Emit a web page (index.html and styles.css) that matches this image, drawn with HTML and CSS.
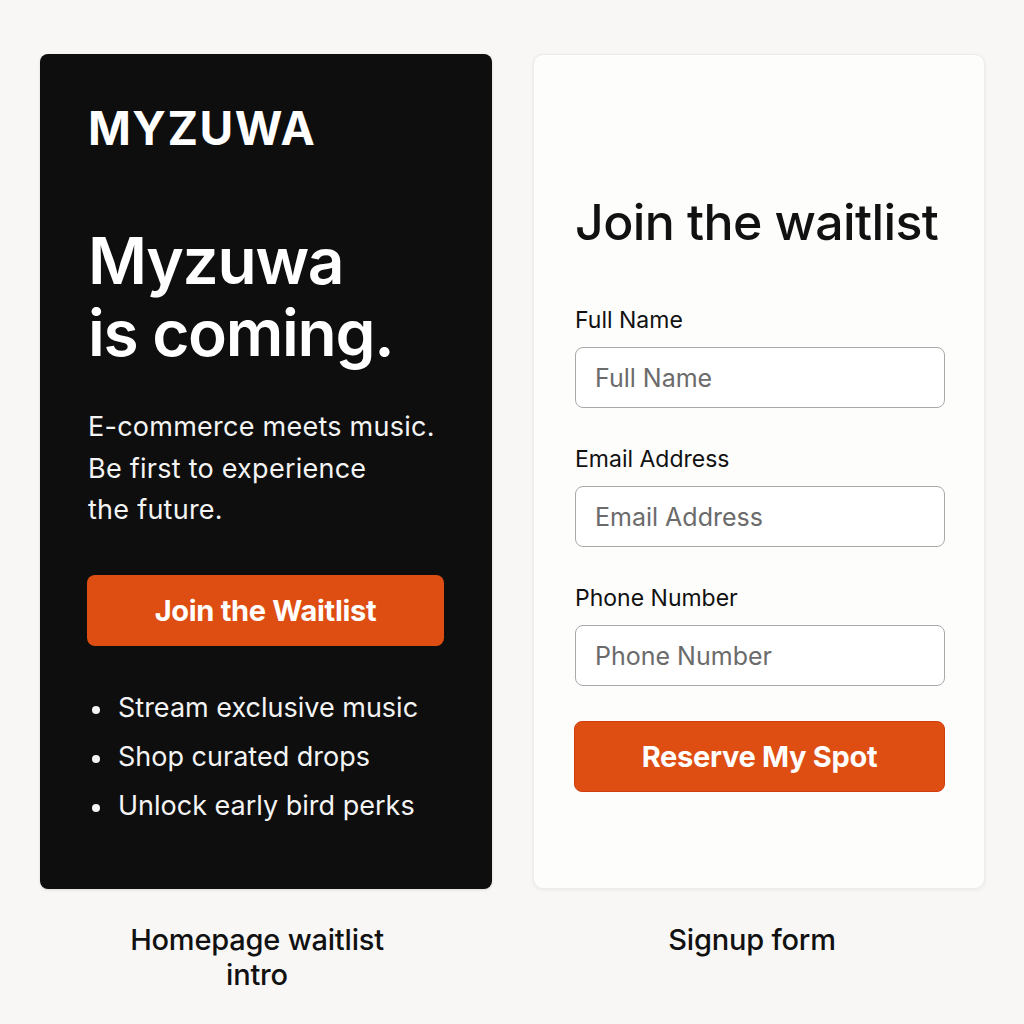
FILE: index.html
```html
<!DOCTYPE html>
<html lang="en">
<head>
<meta charset="utf-8">
<title>Myzuwa waitlist</title>
<link rel="stylesheet" href="styles.css">
</head>
<body>
<main class="board">
  <section class="column">
    <div class="card card-dark">
      <div class="brand">MYZUWA</div>
      <h1 class="headline">Myzuwa<br>is coming.</h1>
      <p class="lede">E-commerce meets music.<br>Be first to experience<br>the future.</p>
      <button class="btn btn-hero" type="button">Join the Waitlist</button>
      <ul class="perks">
        <li>Stream exclusive music</li>
        <li>Shop curated drops</li>
        <li>Unlock early bird perks</li>
      </ul>
    </div>
    <p class="caption caption-left">Homepage waitlist intro</p>
  </section>
  <section class="column">
    <div class="card card-light">
      <h2 class="form-title">Join the waitlist</h2>
      <form class="form">
        <label class="field">
          <span class="field-label">Full Name</span>
          <input class="field-input" type="text" placeholder="Full Name">
        </label>
        <label class="field">
          <span class="field-label">Email Address</span>
          <input class="field-input" type="email" placeholder="Email Address">
        </label>
        <label class="field">
          <span class="field-label">Phone Number</span>
          <input class="field-input" type="tel" placeholder="Phone Number">
        </label>
        <button class="btn btn-submit" type="button">Reserve My Spot</button>
      </form>
    </div>
    <p class="caption caption-right">Signup form</p>
  </section>
</main>
</body>
</html>
```

FILE: styles.css
```css
* { box-sizing: border-box; }

html, body {
  margin: 0;
  padding: 0;
}

body {
  background: #f8f7f5;
  font-family: Inter, "Noto Sans", "Liberation Sans", sans-serif;
  color: #111;
  width: 1024px;
  height: 1024px;
  overflow: hidden;
}

.board {
  display: grid;
  grid-template-columns: 452px 452px;
  column-gap: 41px;
  padding: 54px 0 0 40px;
}

.column {
  display: flex;
  flex-direction: column;
}

.card {
  height: 835px;
  border-radius: 8px;
}

.card-dark {
  background: #0e0e0e;
  color: #fff;
  padding: 51px 48px 0 48px;
  box-shadow: 0 1px 3px rgba(0,0,0,0.12);
}

.brand {
  font-size: 46px;
  line-height: 46px;
  font-weight: 700;
  letter-spacing: 1.5px;
}

.headline {
  margin: 74px 0 0 0;
  font-size: 64px;
  line-height: 72px;
  font-weight: 600;
  letter-spacing: -1.3px;
}

.lede {
  margin: 37px 0 0 0;
  font-size: 27px;
  line-height: 41.5px;
  font-weight: 400;
  letter-spacing: 0.25px;
  color: #f4f4f4;
}

.btn {
  display: flex;
  align-items: center;
  justify-content: center;
  height: 71px;
  border-radius: 8px;
  background: #de4e12;
  color: #fff;
  font-family: inherit;
  font-size: 29px;
  font-weight: 700;
  letter-spacing: -0.3px;
  cursor: pointer;
}

.btn-hero {
  margin-top: 44px;
  width: 357px;
  margin-left: -1px;
  border: none;
}

.perks {
  list-style: none;
  margin: 37px 0 0 0;
  padding: 0;
}

.perks li {
  position: relative;
  padding-left: 30px;
  font-size: 27px;
  line-height: 49px;
  color: #f4f4f4;
}

.perks li::before {
  content: "";
  position: absolute;
  left: 4px;
  top: 23px;
  width: 8px;
  height: 8px;
  border-radius: 50%;
  background: #f4f4f4;
}

.card-light {
  background: #fdfdfc;
  border: 1px solid #ebebe8;
  border-radius: 10px;
  padding: 137px 40px 0 41px;
  box-shadow: 0 1px 4px rgba(0,0,0,0.06);
}

.form-title {
  margin: 0;
  font-size: 50px;
  line-height: 60px;
  font-weight: 500;
  letter-spacing: -0.6px;
  color: #111;
}

.form {
  margin-top: 54px;
  display: flex;
  flex-direction: column;
}

.field {
  display: flex;
  flex-direction: column;
  margin-bottom: 37px;
}

.field:last-of-type {
  margin-bottom: 35px;
}

.field-label {
  font-size: 23px;
  line-height: 29px;
  color: #111;
  margin-bottom: 12px;
}

.field-input {
  height: 61px;
  width: 370px;
  border: 1px solid #a9a9a9;
  border-radius: 8px;
  background: #fff;
  padding: 0 19px;
  font-family: inherit;
  font-size: 25px;
  color: #111;
  outline: none;
}

.field-input::placeholder {
  color: #6b6b6b;
}

.btn-submit {
  width: 371px;
  margin-left: -1px;
  border: 1px solid #d23d0d;
}

.caption {
  margin: 33px auto 0 auto;
  font-size: 29px;
  line-height: 35px;
  font-weight: 500;
  letter-spacing: -0.2px;
  text-align: center;
  color: #111;
}

.caption-left {
  max-width: 280px;
  transform: translateX(-9px);
}

.caption-right {
  transform: translateX(-7px);
}
```
